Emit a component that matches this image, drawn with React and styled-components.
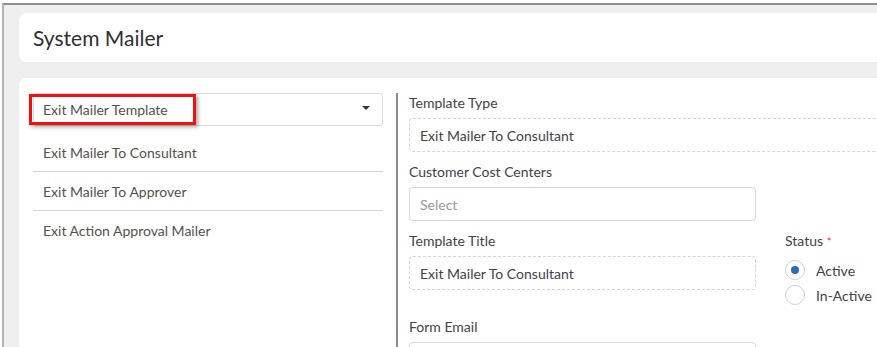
import React from 'react';
import styled, { createGlobalStyle } from 'styled-components';

const GlobalStyle = createGlobalStyle`
  html, body {
    margin: 0;
    padding: 0;
    background: #ffffff;
    overflow: hidden;
  }
  body {
    font-family: 'Lato', 'Open Sans', sans-serif;
  }
`;

const templates = [
  'Exit Mailer To Consultant',
  'Exit Mailer To Approver',
  'Exit Action Approval Mailer',
];

export default function App() {
  return (
    <>
      <GlobalStyle />
      <Frame>
        <Screen>
          <HeaderCard>
            <Title>System Mailer</Title>
          </HeaderCard>
          <MainCard>
            <LeftCol>
              <Dropdown>
                <DropdownText>Exit Mailer Template</DropdownText>
                <Caret />
                <Highlight />
              </Dropdown>
              <List>
                {templates.map(t => (
                  <ListItem key={t}>{t}</ListItem>
                ))}
              </List>
            </LeftCol>
            <Divider />
            <RightCol>
              <Field>
                <Label>Template Type</Label>
                <DashedBox wide>Exit Mailer To Consultant</DashedBox>
              </Field>
              <Field>
                <Label>Customer Cost Centers</Label>
                <Input>Select</Input>
              </Field>
              <Row>
                <Field>
                  <Label>Template Title</Label>
                  <DashedBox>Exit Mailer To Consultant</DashedBox>
                </Field>
                <StatusGroup>
                  <Label>
                    Status <Required>*</Required>
                  </Label>
                  <Radios>
                    <RadioRow>
                      <Radio checked />
                      <RadioLabel>Active</RadioLabel>
                    </RadioRow>
                    <RadioRow>
                      <Radio />
                      <RadioLabel>In-Active</RadioLabel>
                    </RadioRow>
                  </Radios>
                </StatusGroup>
              </Row>
              <Field spaced>
                <Label>Form Email</Label>
                <Input />
              </Field>
            </RightCol>
          </MainCard>
        </Screen>
      </Frame>
    </>
  );
}

const Frame = styled.div`
  padding: 3px 0 0 2px;
  background: #ffffff;
  height: 344px;
  width: 875px;
  overflow: hidden;
`;

const Screen = styled.div`
  width: 920px;
  height: 100%;
  box-sizing: border-box;
  background: #efeff0;
  border-top: 2px solid #8e8e8e;
  border-left: 2px solid #b4b4b4;
  padding: 8px 0 0 15px;
  display: flex;
  flex-direction: column;
  gap: 16px;
`;

const HeaderCard = styled.div`
  flex-shrink: 0;
  background: #ffffff;
  border-radius: 8px;
  height: 49px;
  display: flex;
  align-items: center;
  padding-left: 14px;
`;

const Title = styled.h1`
  margin: 0;
  font-size: 21px;
  font-weight: 400;
  color: #2f2f33;
`;

const MainCard = styled.div`
  flex: 1;
  background: #ffffff;
  border-radius: 8px 8px 0 0;
  padding: 15px 0 0 14px;
  display: flex;
  align-items: stretch;
`;

const LeftCol = styled.div`
  flex: 0 0 350px;
  display: flex;
  flex-direction: column;
`;

const Dropdown = styled.div`
  position: relative;
  height: 33px;
  box-sizing: border-box;
  border: 1px solid #dcdcdc;
  border-radius: 3px;
  display: flex;
  align-items: center;
  justify-content: space-between;
  padding: 0 12px 0 9px;
`;

const DropdownText = styled.span`
  font-size: 14px;
  color: #55504d;
`;

const Caret = styled.span`
  width: 0;
  height: 0;
  border-left: 4px solid transparent;
  border-right: 4px solid transparent;
  border-top: 4px solid #333;
  margin-top: -3px;
`;

const Highlight = styled.div`
  position: absolute;
  left: -5px;
  top: 0;
  width: 167px;
  height: 31px;
  box-sizing: border-box;
  border: 3px solid #ee1111;
  box-shadow: 2px 2px 4px rgba(0, 0, 0, 0.35);
`;

const List = styled.div`
  margin-top: 7px;
  display: flex;
  flex-direction: column;
`;

const ListItem = styled.div`
  height: 38px;
  border-bottom: 1px solid #d4d4d4;
  display: flex;
  align-items: center;
  padding-left: 10px;
  font-size: 14px;
  color: #55504d;

  &:last-child {
    border-bottom: none;
  }
`;

const Divider = styled.div`
  flex-shrink: 0;
  width: 2px;
  background: #8a8a8a;
  margin: 0 11px 0 13px;
`;

const RightCol = styled.div`
  flex: 1;
  display: flex;
  flex-direction: column;
  padding-top: 1px;
`;

const Field = styled.div`
  display: flex;
  flex-direction: column;
  gap: 7px;
  margin-top: ${p => (p.spaced ? '13px' : '0')};
  margin-bottom: 11px;
`;

const Label = styled.div`
  font-size: 14px;
  line-height: 17px;
  color: #45404a;
`;

const Required = styled.span`
  color: #e03a3a;
  font-size: 11px;
`;

const DashedBox = styled.div`
  width: ${p => (p.wide ? '520px' : '347px')};
  height: 34px;
  box-sizing: border-box;
  border: 1px dashed #d4d4d4;
  border-radius: 4px;
  display: flex;
  align-items: center;
  padding-left: 10px;
  font-size: 14px;
  color: #45404a;
`;

const Input = styled.div`
  width: 347px;
  height: 34px;
  box-sizing: border-box;
  border: 1px solid #d6d6d6;
  border-radius: 4px;
  display: flex;
  align-items: center;
  padding-left: 10px;
  font-size: 14px;
  color: #9a9a9a;
`;

const Row = styled.div`
  display: flex;
  align-items: flex-start;
`;

const StatusGroup = styled.div`
  margin-left: 29px;
  display: flex;
  flex-direction: column;
`;

const Radios = styled.div`
  margin-top: 10px;
  display: flex;
  flex-direction: column;
  gap: 5px;
`;

const RadioRow = styled.div`
  display: flex;
  align-items: center;
  gap: 11px;
`;

const Radio = styled.span`
  width: 20px;
  height: 20px;
  box-sizing: border-box;
  border: 1px solid #d0d0d0;
  border-radius: 50%;
  display: flex;
  align-items: center;
  justify-content: center;

  &::after {
    content: '';
    width: 8px;
    height: 8px;
    border-radius: 50%;
    background: ${p => (p.checked ? '#2c6cb5' : 'transparent')};
  }
`;

const RadioLabel = styled.span`
  font-size: 14px;
  color: #45404a;
`;
